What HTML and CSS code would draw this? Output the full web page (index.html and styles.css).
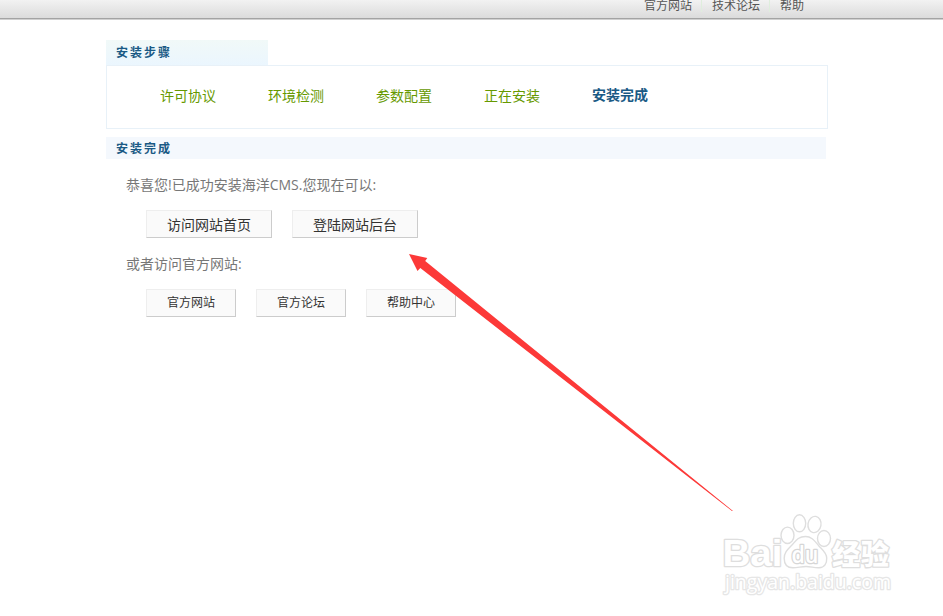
FILE: index.html
```html
<!DOCTYPE html>
<html lang="zh-CN">
<head>
<meta charset="utf-8">
<title>安装完成</title>
<link rel="stylesheet" href="styles.css">
</head>
<body>
<header class="top">
  <nav class="top-nav"><a>官方网站</a><i></i><a>技术论坛</a><i></i><a>帮助</a></nav>
</header>
<main class="page">
  <h2 class="tab">安装步骤</h2>
  <ol class="steps">
    <li>许可协议</li><li>环境检测</li><li>参数配置</li><li>正在安装</li><li class="current">安装完成</li>
  </ol>
  <h2 class="title">安装完成</h2>
  <section class="content">
    <p>恭喜您!已成功安装海洋CMS.您现在可以:</p>
    <div class="buttons large"><a>访问网站首页</a><a>登陆网站后台</a></div>
    <p>或者访问官方网站:</p>
    <div class="buttons"><a>官方网站</a><a>官方论坛</a><a>帮助中心</a></div>
  </section>
</main>
<svg class="overlay" width="943" height="616" viewBox="0 0 943 616">
  <path class="arrow" d="M409 254L427.300 258L425.200 261L733 511L732 511L420.300 268L417.500 271Z"/>
  <g class="mark">
    <text class="brand" x="722.500" y="566" textLength="60" lengthAdjust="spacingAndGlyphs">Bai</text>
    <ellipse cx="787.500" cy="535.300" rx="6.500" ry="8.200"/>
    <ellipse cx="799.500" cy="523.300" rx="6.200" ry="8.500"/>
    <ellipse cx="814.500" cy="524.500" rx="6.500" ry="8.200" transform="rotate(10 814.500 524.500)"/>
    <ellipse cx="824" cy="538.500" rx="6.500" ry="8"/>
    <path d="M805.500 536.500C797 536.500 795 542.500 791 546C787 550 784.200 553 784.200 558.500C784.200 564.500 787 567.800 793 567.800C798 567.800 801 566.500 806 566.500C811 566.500 814 568 819 567.800C824.500 567.500 827 563.500 826.700 558C826.400 552 822 549.500 818.500 545.500C815 541.500 812 536.500 805.500 536.500Z"/>
    <text class="du" x="791.500" y="562.500" textLength="27" lengthAdjust="spacingAndGlyphs">du</text>
    <text class="cjk" x="832" y="564.500" textLength="57">经验</text>
    <text class="url" x="725" y="588.500" textLength="166">jingyan.baidu.com</text>
  </g>
</svg>
</body>
</html>
```
FILE: styles.css
```css
* { box-sizing: border-box; }
body {
  margin: 0;
  min-height: 616px;
  background: #fff;
  color: #777;
  font: 14px/20px "Open Sans", "Noto Sans CJK SC", sans-serif;
}
.top {
  height: 20px;
  background: linear-gradient(#f2f2f2, #dadada);
  border-bottom: 1px solid #d0d0d0;
  box-shadow: inset 0 -1px #a3a3a3;
}
.top-nav {
  display: flex;
  margin-left: 644px;
  font-size: 12px;
  line-height: 12px;
  color: #555;
}
.top-nav i { width: 1px; margin: 0 10px 0 9px; background: #dfeedd; }
.page { width: 722px; margin: 20px 0 0 106px; }
h2 {
  margin: 0;
  padding-left: 10px;
  color: #1a5a85;
  font-size: 12px;
  font-weight: 700;
  letter-spacing: 2px;
}
.tab {
  width: 162px;
  height: 25px;
  line-height: 25px;
  background: linear-gradient(#f1f9f8, #ebf6fe);
}
.steps {
  display: flex;
  gap: 52px;
  height: 64px;
  margin: 0 0 8px;
  padding: 20px 0 0 53px;
  border: 1px solid #e8f1f8;
  list-style: none;
  color: #690;
}
.steps .current { color: #1a5a85; font-weight: 700; line-height: 18px; }
.title {
  width: 720px;
  height: 22px;
  line-height: 24px;
  background: #f4f8fd;
}
.content { padding: 16px 20px 0; }
.content p { margin: 0; }
.buttons {
  display: flex;
  gap: 20px;
  padding: 15px 20px 0;
  font-size: 12px;
  color: #333;
}
.buttons a {
  height: 28px;
  padding: 0 20px;
  border: 1px solid #eee;
  border-right-color: #ccc;
  border-bottom-color: #ccc;
  background: #fafafa;
  line-height: 26px;
}
.buttons.large { padding-bottom: 16px; font-size: 14px; }
.buttons.large a { line-height: 28px; }
.overlay { position: absolute; top: 0; left: 0; }
.arrow { fill: #fc3938; }
.mark {
  fill: #fff;
  stroke: #dedede;
  stroke-width: 1.4;
  stroke-linejoin: round;
}
.mark text { paint-order: stroke; stroke-width: 2.6; }
.mark .brand { font: 700 37px "Liberation Sans", sans-serif; }
.mark .du { font: 600 23px "Open Sans", sans-serif; stroke: #d6d6d6; }
.mark .cjk { font: 900 28px "Noto Sans CJK SC", sans-serif; }
.mark .url { font: 400 19.5px "Open Sans", sans-serif; stroke: #e6e6e6; }
```
